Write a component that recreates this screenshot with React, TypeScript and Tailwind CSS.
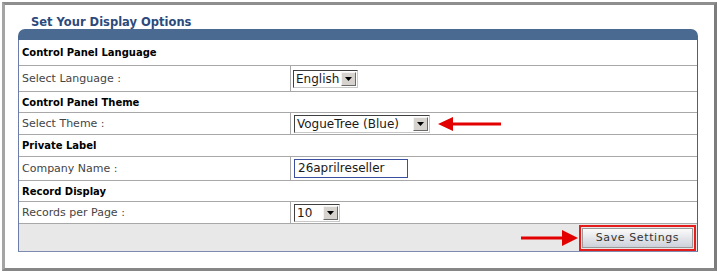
import React from "react";

function DropBtn() {
  return (
    <span className="flex h-[14px] w-[15px] items-center justify-center border border-t-[#f4f4f4] border-l-[#f4f4f4] border-b-[#6a6a6a] border-r-[#6a6a6a] bg-[#d6d3ce]">
      <svg width="7" height="4" viewBox="0 0 7 4">
        <polygon points="0,0 7,0 3.5,4" fill="#000" />
      </svg>
    </span>
  );
}

function FakeSelect({ text, width }: { text: string; width: string }) {
  return (
    <div
      className={`flex h-[18px] items-center justify-between border border-t-[#404040] border-l-[#404040] border-b-[#c8c8c8] border-r-[#c8c8c8] bg-white pl-[2px] pr-[1px] ${width}`}
    >
      <span className="text-[12px] leading-[14px] text-[#1a1a1a]">{text}</span>
      <DropBtn />
    </div>
  );
}

function Section({ title, h }: { title: string; h: string }) {
  return (
    <div className={`flex items-center border-b border-[#a8a8a8] pl-[3px] text-[10px] font-bold text-black ${h}`}>
      {title}
    </div>
  );
}

function Row({ label, h, children }: { label: string; h: string; children: React.ReactNode }) {
  return (
    <div className={`flex border-b border-[#a8a8a8] ${h}`}>
      <div className="flex w-[271px] items-center pl-[3px] text-[#444]">{label}</div>
      <div className="flex flex-1 items-center border-l border-[#a8a8a8] pl-[2px]">{children}</div>
    </div>
  );
}

export default function App() {
  return (
    <div
      className="h-[273px] w-[717px] bg-white pl-[2px] pt-[2px] text-[11px] leading-[13px]"
      style={{ fontFamily: '"DejaVu Sans", Verdana, sans-serif' }}
    >
      <div className="h-[269px] w-[715px] border-[3px] border-t-[#8e8e8e] border-l-[#a4a4a4] border-r-[#7c7c7c] border-b-[#868686] bg-white">
        <div className="flex h-[24px] items-end pl-[26px] text-[11.5px] font-bold leading-[14px] text-[#2c4a7c]">
          Set Your Display Options
        </div>
        <div className="ml-[13px] w-[680px]">
          <div className="h-[11px] rounded-t-[7px] bg-[#4a6a92]" />
          <div className="border-b border-l border-r border-b-[#7d8bb0] border-l-[#6c7cab] border-r-[#4b5aa8]">
            <Section title="Control Panel Language" h="h-[26px]" />
            <Row label="Select Language :" h="h-[26px]">
              <FakeSelect text="English" width="w-[65px]" />
            </Row>
            <Section title="Control Panel Theme" h="h-[21px]" />
            <Row label="Select Theme :" h="h-[22px]">
              <div className="ml-[1px]">
                <FakeSelect text="VogueTree (Blue)" width="w-[136px]" />
              </div>
              <svg width="63" height="14" viewBox="0 0 63 14" className="ml-[8px]">
                <rect x="12" y="5.5" width="51" height="3" fill="#e30000" />
                <polygon points="0,7 15,0 15,14" fill="#e30000" />
              </svg>
            </Row>
            <Section title="Private Label" h="h-[22px]" />
            <Row label="Company Name :" h="h-[24px]">
              <div className="ml-[1px] flex h-[19px] w-[114px] items-center border border-[#3b4fa0] pl-[3px] text-[12px] text-[#1a1a1a]">
                26aprilreseller
              </div>
            </Row>
            <Section title="Record Display" h="h-[21px]" />
            <Row label="Records per Page :" h="h-[22px]">
              <div className="ml-[1px]">
                <FakeSelect text="10" width="w-[46px]" />
              </div>
            </Row>
            <div className="flex h-[27px] items-center justify-end bg-[#e8e8e8] pr-[1px]">
              <svg width="57" height="16" viewBox="0 0 57 16" className="mr-[1px]">
                <rect x="0" y="6.5" width="44" height="3" fill="#e30000" />
                <polygon points="57,8 41,0 41,16" fill="#e30000" />
              </svg>
              <div className="flex h-[26px] w-[117px] items-center border-2 border-[#e41c1c] p-[1px]">
                <div className="flex h-full w-full items-center justify-center border border-[#9a9a9a] bg-gradient-to-b from-[#fbfbfb] to-[#cdd1da] text-[11px] tracking-[0.6px] text-[#333]">
                  Save Settings
                </div>
              </div>
            </div>
          </div>
        </div>
      </div>
    </div>
  );
}
